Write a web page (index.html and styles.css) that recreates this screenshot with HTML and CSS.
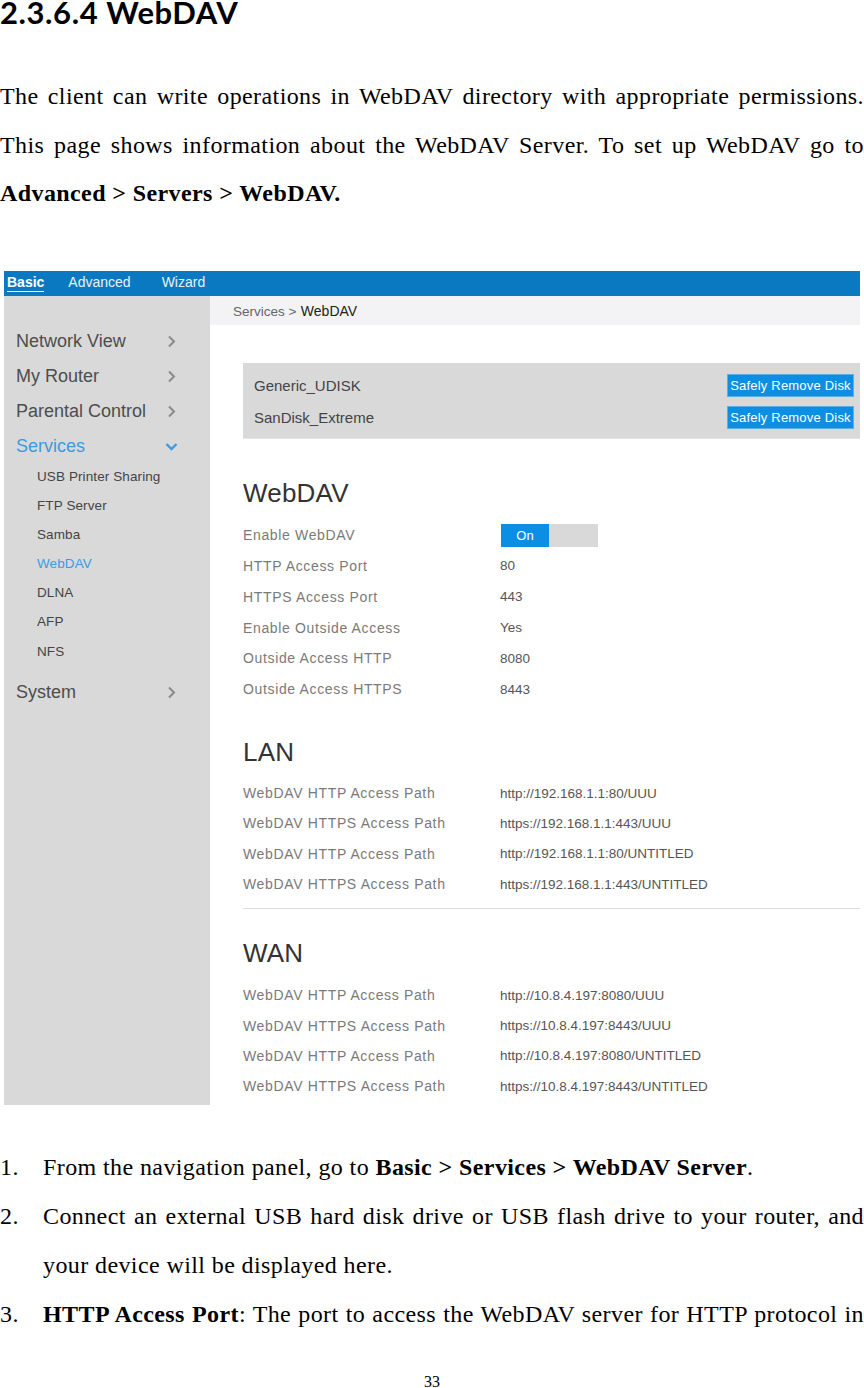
FILE: index.html
```html
<!DOCTYPE html>
<html>
<head>
<meta charset="utf-8">
<link rel="stylesheet" href="styles.css">
</head>
<body>
<h1 class="doc-title">2.3.6.4 WebDAV</h1>
<p class="doc-text">The client can write operations in WebDAV directory with appropriate permissions. This page shows information about the WebDAV Server. To set up WebDAV go to <b>Advanced &gt; Servers &gt; WebDAV.</b></p>

<div class="shot">
  <div class="topnav">
    <span class="tab active">Basic</span>
    <span class="tab">Advanced</span>
    <span class="tab wizard">Wizard</span>
  </div>
  <div class="shot-body">
    <aside class="sidebar">
      <div class="menu-item"><span>Network View</span><svg class="chev" width="9" height="13" viewBox="0 0 9 13"><polyline points="2,1.5 7,6.5 2,11.5"/></svg></div>
      <div class="menu-item"><span>My Router</span><svg class="chev" width="9" height="13" viewBox="0 0 9 13"><polyline points="2,1.5 7,6.5 2,11.5"/></svg></div>
      <div class="menu-item"><span>Parental Control</span><svg class="chev" width="9" height="13" viewBox="0 0 9 13"><polyline points="2,1.5 7,6.5 2,11.5"/></svg></div>
      <div class="menu-item open"><span>Services</span><svg class="chev-down" width="13" height="9" viewBox="0 0 13 9"><polyline points="1.5,2 6.5,7 11.5,2"/></svg></div>
      <ul class="submenu">
        <li>USB Printer Sharing</li>
        <li>FTP Server</li>
        <li>Samba</li>
        <li class="current">WebDAV</li>
        <li>DLNA</li>
        <li>AFP</li>
        <li>NFS</li>
      </ul>
      <div class="menu-item"><span>System</span><svg class="chev" width="9" height="13" viewBox="0 0 9 13"><polyline points="2,1.5 7,6.5 2,11.5"/></svg></div>
    </aside>
    <main class="main">
      <div class="crumb"><span class="crumb-parent">Services &gt;</span> <span class="crumb-cur">WebDAV</span></div>
      <div class="content">
        <div class="disks">
          <div class="disk"><span>Generic_UDISK</span><span class="btn">Safely Remove Disk</span></div>
          <div class="disk"><span>SanDisk_Extreme</span><span class="btn">Safely Remove Disk</span></div>
        </div>

        <h2 class="sec-title first">WebDAV</h2>
        <div class="rows tall">
          <div class="row"><span class="lbl">Enable WebDAV</span><span class="toggle"><span class="on">On</span><span class="off"></span></span></div>
          <div class="row"><span class="lbl">HTTP Access Port</span><span class="val">80</span></div>
          <div class="row"><span class="lbl">HTTPS Access Port</span><span class="val">443</span></div>
          <div class="row"><span class="lbl">Enable Outside Access</span><span class="val">Yes</span></div>
          <div class="row"><span class="lbl">Outside Access HTTP</span><span class="val">8080</span></div>
          <div class="row"><span class="lbl">Outside Access HTTPS</span><span class="val">8443</span></div>
        </div>

        <h2 class="sec-title lan">LAN</h2>
        <div class="rows lan-rows">
          <div class="row"><span class="lbl">WebDAV HTTP Access Path</span><span class="val">http://192.168.1.1:80/UUU</span></div>
          <div class="row"><span class="lbl">WebDAV HTTPS Access Path</span><span class="val">https://192.168.1.1:443/UUU</span></div>
          <div class="row"><span class="lbl">WebDAV HTTP Access Path</span><span class="val">http://192.168.1.1:80/UNTITLED</span></div>
          <div class="row"><span class="lbl">WebDAV HTTPS Access Path</span><span class="val">https://192.168.1.1:443/UNTITLED</span></div>
        </div>
        <hr class="divider">

        <h2 class="sec-title wan">WAN</h2>
        <div class="rows wan-rows">
          <div class="row"><span class="lbl">WebDAV HTTP Access Path</span><span class="val">http://10.8.4.197:8080/UUU</span></div>
          <div class="row"><span class="lbl">WebDAV HTTPS Access Path</span><span class="val">https://10.8.4.197:8443/UUU</span></div>
          <div class="row"><span class="lbl">WebDAV HTTP Access Path</span><span class="val">http://10.8.4.197:8080/UNTITLED</span></div>
          <div class="row"><span class="lbl">WebDAV HTTPS Access Path</span><span class="val">https://10.8.4.197:8443/UNTITLED</span></div>
        </div>
      </div>
    </main>
  </div>
</div>

<ol class="steps">
  <li><span class="num">1.</span><span class="step-text">From the navigation panel, go to <b>Basic &gt; Services &gt; WebDAV Server</b>.</span></li>
  <li><span class="num">2.</span><span class="step-text">Connect an external USB hard disk drive or USB flash drive to your router, and your device will be displayed here.</span></li>
  <li><span class="num">3.</span><span class="step-text last-justify"><b>HTTP Access Port</b>: The port to access the WebDAV server for HTTP protocol in</span></li>
</ol>
<div class="page-num">33</div>
</body>
</html>
```

FILE: styles.css
```css
* { box-sizing: border-box; }

html, body {
  margin: 0;
  padding: 0;
  background: #ffffff;
}

body {
  width: 864px;
  font-family: "Liberation Serif", "Times New Roman", serif;
  color: #000;
  overflow: hidden;
}

.doc-title {
  margin: 0;
  font-family: Lato, "Open Sans", sans-serif;
  font-weight: 700;
  font-size: 31px;
  letter-spacing: 0.6px;
  line-height: 24px;
  height: 24px;
  color: #000;
}

.doc-text {
  margin: 48px 0 0;
  font-size: 24px;
  letter-spacing: 0.4px;
  line-height: 48.5px;
  text-align: justify;
}

/* ---------- screenshot ---------- */
.shot {
  margin: 53.5px 4px 0;
  width: 856px;
  height: 834px;
  display: flex;
  flex-direction: column;
  font-family: "Liberation Sans", Arial, sans-serif;
}

.topnav {
  height: 25px;
  flex: none;
  background: #0a79c2;
  display: flex;
  align-items: flex-start;
  padding-left: 3px;
  gap: 24px;
}

.tab {
  font-size: 14px;
  line-height: 16px;
  margin-top: 3px;
  color: #e8f1f8;
}

.tab.active {
  font-weight: 700;
  color: #ffffff;
  border-bottom: 1.5px solid #ffffff;
  padding-bottom: 1px;
}

.tab.wizard { margin-left: 7px; }

.shot-body {
  flex: 1;
  display: flex;
}

.sidebar {
  width: 206px;
  flex: none;
  background: #d9d9d9;
  padding-top: 27.5px;
}

.menu-item {
  height: 35px;
  display: grid;
  grid-template-columns: 151px auto;
  align-items: center;
  padding-left: 12px;
  font-size: 18px;
  color: #4d4d4d;
}

.menu-item.open { color: #3b9be0; }

.chev polyline {
  fill: none;
  stroke: #8a8a8a;
  stroke-width: 2;
}

.chev-down { margin-left: -2px; }

.chev-down polyline {
  fill: none;
  stroke: #3b9be0;
  stroke-width: 2.4;
}

.submenu {
  list-style: none;
  margin: -2px 0 9px;
  padding: 0 0 0 33px;
}

.submenu li {
  height: 29.2px;
  line-height: 29.2px;
  font-size: 13.5px;
  letter-spacing: 0.1px;
  color: #444;
}

.submenu li.current { color: #3b9be0; }

.main {
  flex: 1;
  display: flex;
  flex-direction: column;
  background: #ffffff;
}

.crumb {
  height: 29px;
  flex: none;
  background: #f3f3f5;
  padding-left: 23px;
  line-height: 29px;
}

.crumb-parent { font-size: 13.5px; color: #666; }
.crumb-cur { font-size: 14px; color: #222; }

.content {
  padding: 38px 0 0 33px;
}

.disks {
  background: #d9d9d9;
  border-bottom: 1px solid #e4e4e4;
  padding: 11px 6px 9px 11px;
  display: flex;
  flex-direction: column;
  gap: 9px;
}

.disk {
  height: 23px;
  display: flex;
  justify-content: space-between;
  align-items: center;
  font-size: 15px;
  color: #444;
}

.btn {
  width: 127px;
  height: 23px;
  line-height: 21px;
  background: #0b8fe5;
  border: 1px solid #5cb0ea;
  color: #ffffff;
  font-size: 13px;
  letter-spacing: 0.2px;
  text-align: center;
  white-space: nowrap;
}

.sec-title {
  margin: 0;
  font-weight: 400;
  font-size: 26px;
  letter-spacing: 0.2px;
  line-height: 30px;
  color: #333;
}

.sec-title.first { margin-top: 39.4px; }
.sec-title.lan { margin-top: 32px; }
.sec-title.wan { margin-top: 28.7px; }

.rows { margin-top: 11.4px; }
.rows.lan-rows { margin-top: 11.4px; }
.rows.wan-rows { margin-top: 12.4px; }

.row {
  height: 30.33px;
  display: grid;
  grid-template-columns: 257px 1fr;
  align-items: center;
}

.rows.tall .row { height: 30.8px; }

.lbl {
  font-size: 14px;
  letter-spacing: 0.65px;
  color: #7a7a7a;
  white-space: nowrap;
}

.val {
  font-size: 13.5px;
  color: #555;
  white-space: nowrap;
}

.toggle {
  display: flex;
  width: 97px;
  height: 23px;
  margin-left: 1px;
}

.toggle .on {
  width: 48px;
  background: #0b8fe5;
  color: #ffffff;
  font-size: 13px;
  line-height: 23px;
  text-align: center;
}

.toggle .off {
  width: 49px;
  background: #d9d9d9;
}

.divider {
  margin: 8.8px 0 0;
  border: 0;
  border-top: 1px solid #dcdcdc;
  height: 0;
}

/* ---------- steps ---------- */
.steps {
  list-style: none;
  margin: 38.4px 0 0;
  padding: 0;
  font-size: 24px;
  letter-spacing: 0.4px;
  line-height: 49px;
}

.steps li {
  display: grid;
  grid-template-columns: 43px 1fr;
}

.step-text { text-align: justify; }
.step-text.last-justify { text-align-last: justify; }

.page-num {
  margin-top: 34px;
  font-size: 16px;
  line-height: 18px;
  text-align: center;
}
```
